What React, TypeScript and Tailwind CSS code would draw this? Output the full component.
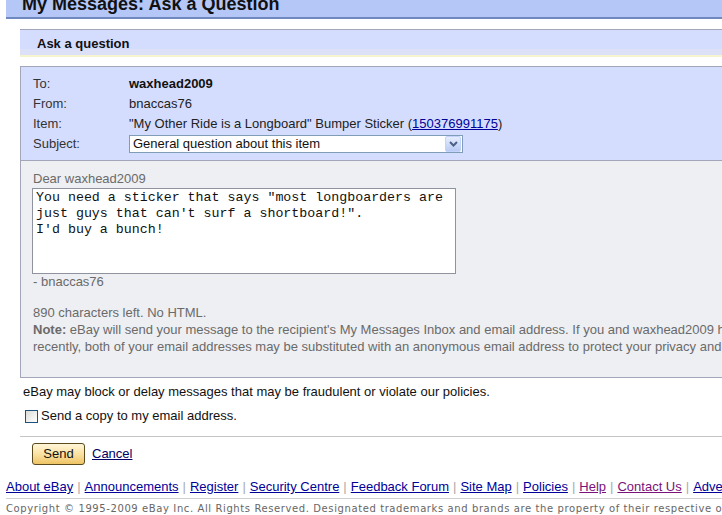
export default function App() {
  const footerLinks = [
    { label: "About eBay" },
    { label: "Announcements" },
    { label: "Register" },
    { label: "Security Centre" },
    { label: "Feedback Forum" },
    { label: "Site Map" },
    { label: "Policies" },
    { label: "Help", visited: true },
    { label: "Contact Us", visited: true },
    { label: "Advertise With Us" },
  ]

  return (
    <div className="w-[722px] h-[515px] overflow-hidden bg-white font-['Liberation_Sans',Arial,sans-serif] text-[13px] text-[#333]">
      <div className="w-[820px]">
        {/* Page title */}
        <div className="ml-[6px] h-[19px] overflow-hidden bg-[#b5c7f7] border-b-2 border-[#7088c0] pl-[16px]">
          <h1 className="-mt-[5px] text-[18px] leading-[18px] font-bold text-[#111]">My Messages: Ask a Question</h1>
        </div>

        {/* Section header */}
        <div className="ml-[20px] mt-[10px] border-t border-[#a3a6b8]">
          <div className="h-[19px] bg-[#d5ddff] pl-[17px] pt-[6px]">
            <h2 className="text-[13px] leading-[15px] font-bold text-[#111]">Ask a question</h2>
          </div>
          <div className="h-[6px] bg-[#dde1f7]" />
          <div className="h-[2px] bg-[#f6f4cf]" />
        </div>

        {/* Form */}
        <div className="ml-[20px] mt-[9px] border border-r-0 border-[#a3a6b8]">
          <div className="bg-[#d5ddff] pl-[12px] pt-[7px] pb-[6px] border-b border-[#a3a6b8]">
            <div className="flex h-[20px] items-center">
              <span className="w-[96px]">To:</span>
              <span className="font-bold text-[#111]">waxhead2009</span>
            </div>
            <div className="flex h-[20px] items-center">
              <span className="w-[96px]">From:</span>
              <span className="text-[#222]">bnaccas76</span>
            </div>
            <div className="flex h-[20px] items-center">
              <span className="w-[96px]">Item:</span>
              <span className="text-[#222]">
                "My Other Ride is a Longboard" Bumper Sticker (
                <a className="text-[#000099] underline">150376991175</a>)
              </span>
            </div>
            <div className="flex h-[20px] items-center">
              <span className="w-[96px]">Subject:</span>
              <div className="flex h-[18px] w-[334px] items-center justify-between border border-[#7f9db9] bg-white pl-[3px] pr-[1px]">
                <span className="text-[#111] leading-[16px]">General question about this item</span>
                <span className="flex h-[16px] w-[16px] items-center justify-center rounded-[2px] border border-[#c3d3fd] bg-gradient-to-b from-[#e6eeff] to-[#b9cbf3]">
                  <svg width="9" height="6" viewBox="0 0 9 6">
                    <path d="M1 1l3.5 3.5L8 1" fill="none" stroke="#4d6185" strokeWidth="2" />
                  </svg>
                </span>
              </div>
            </div>
          </div>

          <div className="bg-[#eeeff2] pl-[12px] pt-[10px] pb-[22px] text-[#6a6a6a] leading-[16px]">
            <div>Dear waxhead2009</div>
            <div className="-ml-[1px] mt-[1px] h-[86px] w-[424px] border border-[#8e939f] bg-white pl-[3px] pt-[1px] font-['Liberation_Mono','Courier_New',monospace] text-[13.3px] leading-[16px] text-[#111] whitespace-pre">
              {"You need a sticker that says \"most longboarders are\njust guys that can't surf a shortboard!\".\nI'd buy a bunch!"}
            </div>
            <div>- bnaccas76</div>
            <div className="mt-[14px] leading-[17px] whitespace-nowrap">
              <div>890 characters left. No HTML.</div>
              <div>
                <b>Note:</b> eBay will send your message to the recipient's My Messages Inbox and email address. If you and waxhead2009 have communicated
              </div>
              <div>
                recently, both of your email addresses may be substituted with an anonymous email address to protect your privacy and security.
              </div>
            </div>
          </div>
        </div>

        <p className="ml-[23px] mt-[6px] leading-[16px] text-[#111]">
          eBay may block or delay messages that may be fraudulent or violate our policies.
        </p>

        <label className="ml-[25px] mt-[8px] flex h-[16px] items-center gap-[3px] text-[#111]">
          <span className="h-[13px] w-[13px] border border-[#1c5180] bg-gradient-to-br from-[#dcdcd7] to-white" />
          Send a copy to my email address.
        </label>

        <div className="ml-[20px] mt-[12px] border-t border-[#c4c4c4]" />

        <div className="ml-[32px] mt-[6px] flex items-center gap-[7px]">
          <button className="h-[22px] w-[53px] rounded-[3px] border border-[#5a4a1c] bg-gradient-to-b from-[#fff6d9] via-[#fbe2a3] to-[#eec463] text-[13px] text-[#111]">
            Send
          </button>
          <a className="text-[#000066] underline">Cancel</a>
        </div>

        {/* Footer */}
        <div className="ml-[6px] mt-[14px] flex items-center whitespace-nowrap leading-[16px]">
          {footerLinks.map((l, i) => (
            <span key={l.label} className="flex items-center">
              {i > 0 && <span className="px-[4px] text-[#aaa]">|</span>}
              <a className={l.visited ? "text-[#7b117b] underline" : "text-[#000099] underline"}>{l.label}</a>
            </span>
          ))}
        </div>
        <div className="ml-[6px] mt-[3px] border-t border-[#d0d0d0]" />
        <p className="ml-[6px] mt-[3px] whitespace-nowrap font-['DejaVu_Sans',Verdana,sans-serif] text-[10px] leading-[14px] tracking-[0.6px] text-[#666]">
          Copyright © 1995-2009 eBay Inc. All Rights Reserved. Designated trademarks and brands are the property of their respective owners.
        </p>
      </div>
    </div>
  )
}
